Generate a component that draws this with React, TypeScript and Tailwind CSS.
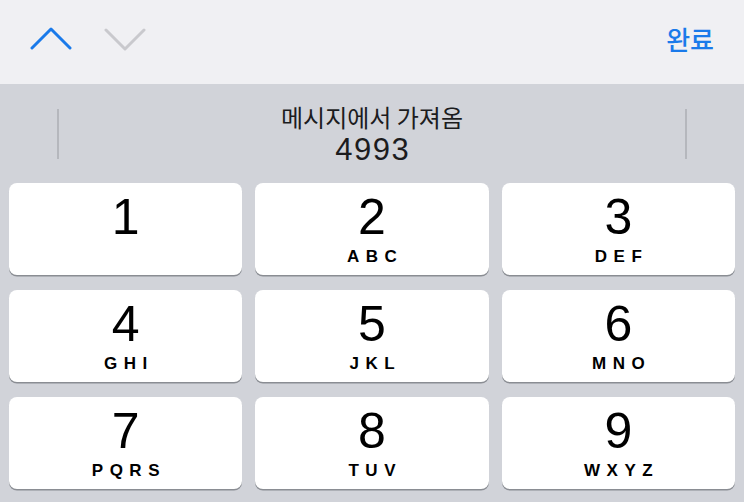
import React from "react";

const keys = [
  { n: "1", l: "" },
  { n: "2", l: "ABC" },
  { n: "3", l: "DEF" },
  { n: "4", l: "GHI" },
  { n: "5", l: "JKL" },
  { n: "6", l: "MNO" },
  { n: "7", l: "PQRS" },
  { n: "8", l: "TUV" },
  { n: "9", l: "WXYZ" },
];

function Key({ n, l }: { n: string; l: string }) {
  return (
    <button className="h-[92px] rounded-[8px] bg-white shadow-[0_1.5px_0_#8a8d93] flex flex-col items-center pt-[9px] text-black">
      <span className="h-[50px] text-[50px] leading-none font-normal">{n}</span>
      {l && (
        <span className="mt-[6px] text-[17px] leading-none font-bold tracking-[6.5px] pl-[6.5px]">{l}</span>
      )}
    </button>
  );
}

export default function App() {
  return (
    <div className="w-[744px] h-[502px] overflow-hidden bg-[#d1d3d9] font-['Liberation_Sans','Noto_Sans_CJK_KR',sans-serif]">
      {/* toolbar */}
      <div className="h-[84px] bg-[#f0f0f3] flex items-center pl-[30px] pr-[30px]">
        <svg width="42" height="24" viewBox="0 0 42 24" className="mb-[7px]">
          <polyline points="2,21 21,2 40,21" fill="none" stroke="#1a7aea" strokeWidth="3" strokeLinecap="round" strokeLinejoin="round" />
        </svg>
        <svg width="42" height="24" viewBox="0 0 42 24" className="ml-[32px] mb-[6px]">
          <polyline points="2,3 21,22 40,3" fill="none" stroke="#c9c9cd" strokeWidth="3" strokeLinecap="round" strokeLinejoin="round" />
        </svg>
        <span className="ml-auto mb-[7px] text-[26px] font-medium text-[#1a7aea] font-['Noto_Sans_CJK_KR',sans-serif]">완료</span>
      </div>

      {/* suggestion bar */}
      <div className="h-[99px] flex items-center px-[57px]">
        <div className="w-[2px] h-[50px] bg-[#b5b7bd]" />
        <div className="flex-1 flex flex-col items-center pt-[1px] text-[#1c1c1e]">
          <span className="text-[24px] leading-[32px] font-['Noto_Sans_CJK_KR',sans-serif]">메시지에서 가져옴</span>
          <span className="text-[31px] leading-[34px] tracking-[1.5px] pl-[1.5px]">4993</span>
        </div>
        <div className="w-[2px] h-[50px] bg-[#b5b7bd]" />
      </div>

      {/* keypad */}
      <div className="grid grid-cols-3 gap-x-[13px] gap-y-[15px] px-[9px]">
        {keys.map((k) => (
          <Key key={k.n} n={k.n} l={k.l} />
        ))}
      </div>
    </div>
  );
}
